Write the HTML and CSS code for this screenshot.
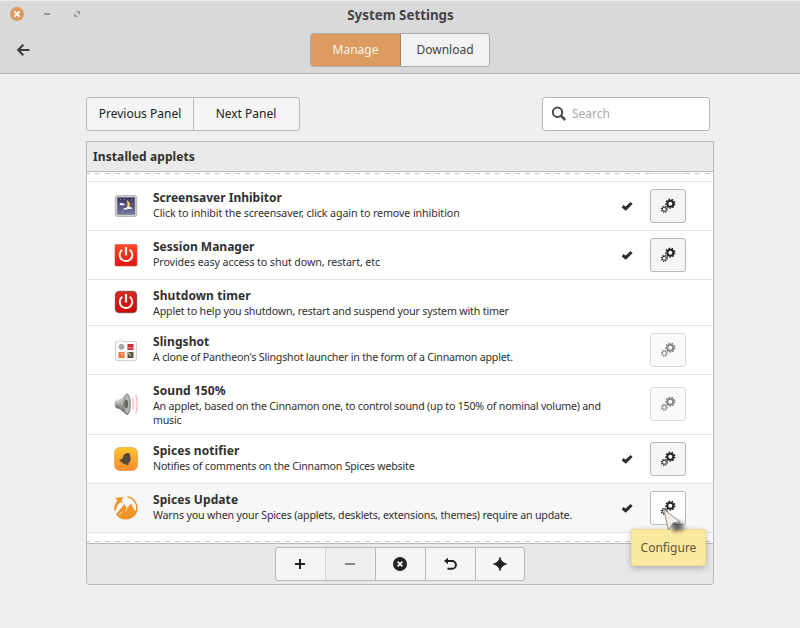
FILE: index.html
```
<!DOCTYPE html>
<html lang="en">
<head>
<meta charset="utf-8">
<title>System Settings</title>
<link rel="stylesheet" href="styles.css">
</head>
<body>
<svg class="defs" width="0" height="0">
  <defs>
    <symbol id="gears" viewBox="0 0 16 16">
      <g fill="none" stroke="currentColor">
        <circle cx="10.3" cy="5.7" r="3" stroke-width="2"/>
        <circle cx="10.3" cy="5.7" r="4.4" stroke-width="1.5" stroke-dasharray="1.5 1.572"/>
        <circle cx="4.3" cy="11.3" r="2" stroke-width="1"/>
        <circle cx="4.3" cy="11.3" r="3" stroke-width="1.2" stroke-dasharray="1.15 1.206"/>
      </g>
    </symbol>
    <symbol id="check" viewBox="0 0 12 10">
      <path d="M1.600 5.200 4.700 7.700 10.600 2" fill="none" stroke="currentColor" stroke-width="3.100"/>
    </symbol>
    <symbol id="power" viewBox="0 0 24 24">
      <path d="M8.2 6.8a6.3 6.3 0 1 0 7.6 0" fill="none" stroke="#fff3ee" stroke-width="2"/>
      <path d="M12 4v8.4" stroke="#fff3ee" stroke-width="2.2"/>
    </symbol>
    <linearGradient id="red" x2="0" y2="1"><stop stop-color="#fa4a28"/><stop offset="1" stop-color="#dc1414"/></linearGradient>
    <linearGradient id="darkred" x2="0" y2="1"><stop stop-color="#d92a22"/><stop offset="1" stop-color="#cb0808"/></linearGradient>
    <linearGradient id="amber" x2="0" y2="1"><stop stop-color="#fcc52d"/><stop offset="1" stop-color="#fb8a31"/></linearGradient>
    <linearGradient id="steel" x2="0" y2="1"><stop stop-color="#e8e8e8"/><stop offset=".5" stop-color="#aaa"/><stop offset="1" stop-color="#555"/></linearGradient>
    <linearGradient id="night" x2="0" y2="1"><stop stop-color="#34345c"/><stop offset="1" stop-color="#7775a0"/></linearGradient>
    <filter id="soft" x="-50%" y="-50%" width="200%" height="200%"><feGaussianBlur stdDeviation="2.2"/></filter>
  </defs>
</svg>

<header class="header">
  <div class="titlebar">
    <div class="controls">
      <svg width="14" height="14" viewBox="0 0 14 14"><circle cx="7" cy="7" r="7" fill="#de9b60"/><path d="M4.4 4.4 9.6 9.6M9.6 4.4 4.4 9.6" stroke="#fff" stroke-width="1.8"/></svg>
      <svg width="14" height="14" viewBox="0 0 14 14"><path d="M4 7h6" stroke="#969696" stroke-width="2"/></svg>
      <svg width="14" height="14" viewBox="0 0 14 14"><path d="M6 4h4v4zM4 6v4h4z" fill="#969696"/></svg>
    </div>
    <h1 class="title">System Settings</h1>
  </div>
  <div class="navbar">
    <svg class="back" width="14" height="14" viewBox="0 0 14 14"><path d="M13.500 7H2.4M7.300 1.800 2.100 7l5.200 5.200" fill="none" stroke="#3c3c3c" stroke-width="2"/></svg>
    <div class="tabs"><div class="tab active">Manage</div><div class="tab">Download</div></div>
  </div>
</header>

<main class="content">
  <div class="tools">
    <div class="switcher"><div class="prev">Previous Panel</div><div class="next">Next Panel</div></div>
    <div class="search">
      <svg width="16" height="16" viewBox="0 0 16 16"><circle cx="6.5" cy="6.300" r="4.7" fill="none" stroke="#4a4a4a" stroke-width="2"/><path d="m9.900 9.700 4.300 4.300" stroke="#4a4a4a" stroke-width="2.5"/></svg>
      <span>Search</span>
    </div>
  </div>

  <section class="panel">
    <div class="panel-head">Installed applets</div>
    <div class="list">
      <div class="peek"><div class="peek-btn"></div></div>
      <div class="row">
        <svg class="icon" viewBox="0 0 24 24"><rect x="1.3" y="1.5" width="21.4" height="21" rx="2" fill="#cfcfcf" stroke="#aaa" stroke-width=".8"/><rect x="3.4" y="3.5" width="17.4" height="16.8" fill="url(#night)" stroke="#68687a" stroke-width=".5"/><path d="M13 6.500c4 2.500 3 8-1.500 8.500 2.500-2 3-5 1.500-8.500z" fill="#ffd65a" stroke="#ffd65a" stroke-width=".6"/><path d="M5.500 10.800c0-2 2-2.500 3-1.500 1.500-.4 2.500.7 2 2H5.500zM12.500 14c1-2.500 3-2 3.300-.9 1.700-.3 2.500 1 2.200 2h-5.500zM9.500 14h4v1.500h-4z" fill="#eaf0ff"/><path d="M6 5.500h1M10 5h1M17 6h1M18 10h1M8 17.500h1" stroke="#b8b4d0" stroke-width=".8"/></svg>
        <div class="text"><div class="name">Screensaver Inhibitor</div><div class="desc snug">Click to inhibit the screensaver, click again to remove inhibition</div></div>
        <svg class="check"><use href="#check"/></svg>
        <div class="cfg"><svg><use href="#gears"/></svg></div>
      </div>
      <div class="row">
        <svg class="icon" viewBox="0 0 24 24"><rect x="1" y="1.500" width="22" height="21.500" rx="1.200" fill="url(#red)" stroke="#e34a36" stroke-width=".6"/><use href="#power"/></svg>
        <div class="text"><div class="name">Session Manager</div><div class="desc snug">Provides easy access to shut down, restart, etc</div></div>
        <svg class="check"><use href="#check"/></svg>
        <div class="cfg"><svg><use href="#gears"/></svg></div>
      </div>
      <div class="row short">
        <svg class="icon" viewBox="0 0 24 24"><rect x="1.300" y="1.300" width="21.400" height="21.400" rx="4" fill="url(#darkred)" stroke="#84413d" stroke-width=".9"/><use href="#power"/></svg>
        <div class="text"><div class="name wide">Shutdown timer</div><div class="desc close">Applet to help you shutdown, restart and suspend your system with timer</div></div>
      </div>
      <div class="row">
        <svg class="icon" viewBox="0 0 24 24"><path d="M3 3.500h1.500L6.500 1.500l2 2H21a1.500 1.500 0 0 1 1.500 1.500v16a1.500 1.500 0 0 1-1.500 1.500H3A1.500 1.500 0 0 1 1.500 21V5A1.500 1.500 0 0 1 3 3.500z" fill="#fafafa" stroke="#ccc" stroke-width=".9"/><circle cx="7.500" cy="8.800" r="2.500" fill="#aaa" stroke="#999" stroke-width=".7"/><path d="M13.500 6h6v6h-6z" fill="#cb2b37"/><path d="M13.500 9.800h6" stroke="#f0b2b2" stroke-width=".8"/><path d="M4.500 14h6v6h-6z" fill="#f47338"/><path d="M6.500 15.500H9l-1.500 3" fill="none" stroke="#ffd7c0" stroke-width=".8"/><path d="M13.500 14h6v6h-6z" fill="#5c554c"/><path d="m13.500 14.500 3.500 3" stroke="#c2b99d" stroke-width="1.400"/></svg>
        <div class="text"><div class="name wide">Slingshot</div><div class="desc">A clone of Pantheon's Slingshot launcher in the form of a Cinnamon applet.</div></div>
        <div class="cfg off"><svg><use href="#gears"/></svg></div>
      </div>
      <div class="row tall">
        <svg class="icon" viewBox="0 0 24 24"><path d="M1 9q2-2 6-2v10q-4 0-6-2-1-3 0-6z" fill="url(#steel)"/><path d="M5.500 8 13 1.200q3.500 1 3.500 10.800T13 23L5.500 17z" fill="url(#steel)"/><ellipse cx="13" cy="12" rx="3.300" ry="10" fill="#b5b7b3" stroke="#80837d" stroke-width=".9"/><ellipse cx="12.200" cy="12" rx="1.800" ry="4.300" fill="#62645f"/><path d="M18.600 6q1.600 6 0 12M21.800 2.500q2.600 9.500 0 19" fill="none" stroke="#ffbdc4" stroke-width="1.400"/></svg>
        <div class="text"><div class="name wide">Sound 150%</div><div class="desc">An applet, based on the Cinnamon one, to control sound (up to 150% of nominal volume) and<br>music</div></div>
        <div class="cfg off"><svg><use href="#gears"/></svg></div>
      </div>
      <div class="row">
        <svg class="icon" viewBox="0 0 24 24"><rect x=".3" y=".3" width="23.400" height="23.400" rx="6" fill="url(#amber)" stroke="#dfa052" stroke-width=".6"/><path d="M11.500 6.500q2-1 4.500.2l.2 2q1 3-.2 6l-1.500 1.500-.2 2.600-2.200-1.600-2 .1-5-4q3-.3 4-3 0-2.500 2.400-3.800z" fill="#554935"/></svg>
        <div class="text"><div class="name wide">Spices notifier</div><div class="desc">Notifies of comments on the Cinnamon Spices website</div></div>
        <svg class="check"><use href="#check"/></svg>
        <div class="cfg"><svg><use href="#gears"/></svg></div>
      </div>
      <div class="row hover">
        <svg class="icon" viewBox="0 0 24 24"><path d="M.8 2 9.500 1 7.500 4.500 9 7 6.500 6.200Q2.500 9 2 14.500l-1.800.3Q-.3 8.500 3.500 4.800z" fill="#ed9527"/><path d="M2 18.300 10.500 8l2.300 4.500 4.200-5 4 7.500 2.700-1.500A12 12 0 0 1 2 18.300z" fill="#ed9527"/><path d="m5 19 3.500-3.500M12.800 12.500l-1.500 3" fill="none" stroke="#f7f7f7" stroke-width=".8"/><path d="M13.500.9a11.200 11.200 0 0 1 9 14" fill="none" stroke="#ed9527" stroke-width="1.500"/></svg>
        <div class="text"><div class="name wide">Spices Update</div><div class="desc close">Warns you when your Spices (applets, desklets, extensions, themes) require an update.</div></div>
        <svg class="check"><use href="#check"/></svg>
        <div class="cfg"><svg><use href="#gears"/></svg></div>
      </div>
      <div class="tail"></div>
    </div>
    <div class="actions">
      <div class="group">
        <div class="act"><svg viewBox="0 0 16 16"><path d="M8 3v10M3 8h10" stroke="#222" stroke-width="2"/></svg></div>
        <div class="act dim"><svg viewBox="0 0 16 16"><path d="M3 8h10" stroke="#888" stroke-width="2"/></svg></div>
        <div class="act"><svg viewBox="0 0 16 16"><circle cx="8" cy="8" r="7" fill="#222"/><path d="m5.600 5.600 4.800 4.800m0-4.800-4.800 4.800" stroke="#f5f5f5" stroke-width="1.900"/></svg></div>
        <div class="act"><svg viewBox="0 0 16 16"><path d="M4.500 5H10a3.900 3.900 0 0 1 0 7.800H5.500" fill="none" stroke="#222" stroke-width="2"/><path d="M2 5 6 1.800v6.400z" fill="#222"/></svg></div>
        <div class="act"><svg viewBox="0 0 16 16"><path d="M8 1.500q1 5 6.500 6.500-5.500 1.500-6.500 6.500-1-5-6.500-6.500 5.500-1.500 6.500-6.500z" fill="#222" stroke="#222" stroke-width=".9"/></svg></div>
      </div>
    </div>
  </section>
</main>

<div class="tooltip">Configure</div>
<svg class="pointer" width="40" height="40" viewBox="0 0 40 40"><path d="m9 14 12 2 4 7-11 3z" fill="#000" opacity=".6" filter="url(#soft)"/><path d="M3.500 3 19.800 15.700 13 17 8.500 24z" fill="#f1eeea" stroke="#8c8783" stroke-width=".9" stroke-linejoin="round"/></svg>
</body>
</html>
```
FILE: styles.css
```
* { box-sizing: border-box; }
body {
  margin: 0; width: 800px; height: 628px; overflow: hidden; position: relative;
  background: #efefef; color: #303030;
  font: 12px/17px "Noto Sans", sans-serif;
}
svg { display: block; flex: none; }
.defs { position: absolute; }
.header { height: 74px; background: #d9d9d9; border-top: 1px solid #ececec; border-bottom: 1px solid #b8b8b8; }
.titlebar { height: 32px; display: grid; grid-template-columns: 200px 400px 200px; }
.controls { display: flex; gap: 16px; padding: 6px 0 0 10px; }
.title { margin: 0; padding: 5px 0 0 1px; font-size: 13.33px; line-height: 18px; font-weight: 700; text-align: center; color: #454545; }
.navbar { display: grid; grid-template-columns: 310px 180px; height: 34px; }
.back { margin: 10px 0 0 16px; }
.tabs { display: flex; border: 1px solid #aaa; border-radius: 3px; overflow: hidden; background: #f2f2f2; }
.tab { flex: 1; line-height: 31px; text-align: center; color: #444; }
.tab.active { flex: 0 0 90px; background: #dc9c61; color: #fbf4ee; border-right: 1px solid #a98259; }
.content { padding: 23px 86px 0; }
.tools { display: flex; justify-content: space-between; padding-right: 4px; height: 34px; }
.switcher { display: flex; width: 214px; border: 1px solid #b8b8b8; border-radius: 3px; background: #f5f5f5; color: #222; line-height: 32px; text-align: center; }
.prev { width: 107px; border-right: 1px solid #b8b8b8; }
.next { flex: 1; padding-right: 1px; }
.search { width: 168px; display: flex; align-items: center; gap: 5px; padding-left: 8px; border: 1px solid #b8b8b8; border-radius: 3px; background: #fff; color: #aaa; }
.search span { padding-bottom: 1px; }
.panel { margin-top: 10px; width: 628px; height: 444px; border: 1px solid #b8b8b8; border-radius: 0 0 3px 3px; background: #e8e8e8; }
.panel-head { height: 30px; padding-left: 6px; line-height: 30px; font-weight: 700; letter-spacing: .1px; background: #eaeaea; border-bottom: 1px solid #b8b8b8; }
.list { height: 371px; background: #fff; }
.peek { height: 10px; border-bottom: 1px solid #e4e4e4; padding-left: 563px; background: repeating-linear-gradient(90deg, #c8c8c8 0 5px, transparent 5px 10px) -2px 1px / 640px 1px no-repeat; }
.peek-btn { width: 36px; height: 2px; border: 1px solid #ddd; border-top: 0; border-radius: 0 0 3px 3px; }
.row { height: 49px; display: flex; align-items: center; border-bottom: 1px solid #e4e4e4; padding: 0 27px; }
.row.short { height: 46px; }
.row.tall { height: 60px; }
.row.hover { background: #f7f7f7; }
.icon { width: 24px; height: 24px; margin-right: 15px; }
.short .icon, .tall .icon { margin-bottom: 2px; }
.text { flex: 1; white-space: nowrap; padding-bottom: 3px; }
.short .text, .tall .text { padding-bottom: 0; }
.name { font-weight: 700; line-height: 17px; }
.name.wide { letter-spacing: .08px; }
.desc { font-size: 10.67px; line-height: 14px; letter-spacing: -.214px; }
.desc.close { letter-spacing: -.175px; }
.desc.snug { letter-spacing: -.09px; }
.check { width: 12px; height: 10px; margin-right: 17px; color: #303030; }
.cfg { flex: none; width: 36px; height: 34px; border: 1px solid #b8b8b8; border-radius: 3px; background: #f5f5f5; display: flex; align-items: center; justify-content: center; color: #252525; }
.tall .cfg { margin-bottom: 1px; }
.cfg svg { width: 16px; height: 16px; }
.cfg.off { background: #fafafa; border-color: #dbdbdb; color: #888; }
.hover .cfg { background: #fff; }
.tail { height: 10px; background: repeating-linear-gradient(90deg, #c8c8c8 0 5px, transparent 5px 10px) -2px 8px / 640px 1px no-repeat; }
.actions { height: 41px; border-top: 1px solid #b8b8b8; display: flex; justify-content: center; align-items: flex-start; padding-top: 3px; }
.group { display: flex; width: 250px; height: 34px; border: 1px solid #b8b8b8; border-radius: 3px; background: #f5f5f5; }
.act { width: 50px; display: flex; align-items: center; justify-content: center; padding-right: 1px; border-right: 1px solid #b8b8b8; }
.act:first-child { border-color: #d4d4d4; }
.act:last-child { width: 48px; border: 0; padding: 0; }
.act.dim { background: #efefef; }
.act svg { width: 16px; height: 16px; }
.tooltip { position: absolute; left: 631px; top: 529px; width: 75px; height: 37px; line-height: 35px; text-align: center; background: #fce9a0; color: #5b5540; border: 1px solid #eedc98; border-radius: 2px; box-shadow: 0 2px 6px rgba(0,0,0,.28); }
.pointer { position: absolute; left: 660px; top: 506px; }
```
